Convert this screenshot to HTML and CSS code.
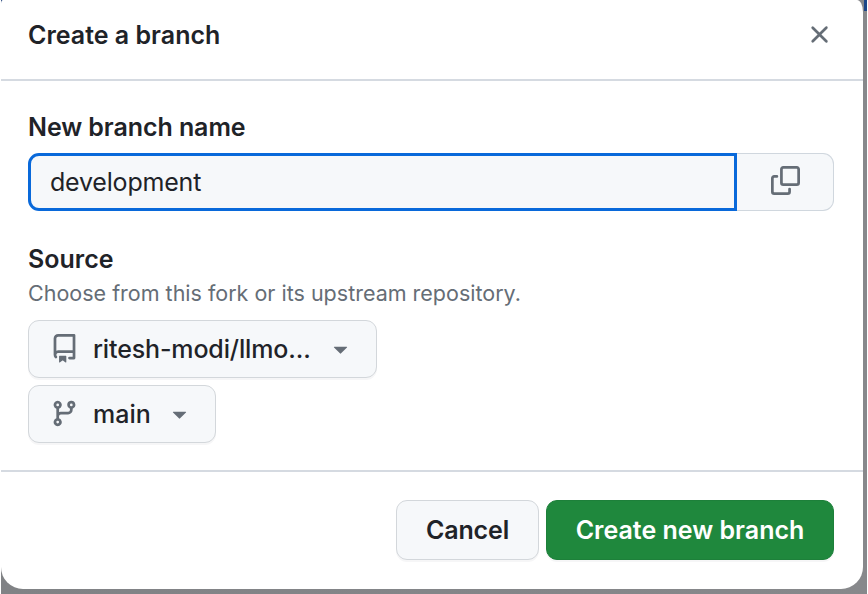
FILE: index.html
```html
<!DOCTYPE html>
<html lang="en">
<head>
<meta charset="utf-8">
<title>Create a branch</title>
<link rel="stylesheet" href="styles.css">
</head>
<body>
<div class="backdrop">
  <div class="dialog" role="dialog" aria-labelledby="dialog-title">
    <header class="dialog-header">
      <h1 class="dialog-title" id="dialog-title"><span>Create a branch</span></h1>
      <button class="close" aria-label="Close">
        <svg class="icon" viewBox="0 0 16 16"><path d="M3.72 3.72a.75.75 0 0 1 1.06 0L8 6.94l3.22-3.22a.749.749 0 0 1 1.275.326.749.749 0 0 1-.215.734L9.06 8l3.22 3.22a.749.749 0 0 1-.326 1.275.749.749 0 0 1-.734-.215L8 9.06l-3.22 3.22a.751.751 0 0 1-1.042-.018.751.751 0 0 1-.018-1.042L6.94 8 3.72 4.78a.75.75 0 0 1 0-1.06Z"/></svg>
      </button>
    </header>
    <div class="dialog-body">
      <label class="label name-label" for="branch-name"><span>New branch name</span></label>
      <div class="input-group">
        <input class="input" id="branch-name" type="text" value="development">
        <button class="copy" aria-label="Copy">
          <svg class="icon" viewBox="0 0 16 16"><path d="M0 6.75C0 5.784.784 5 1.75 5h1.5a.75.75 0 0 1 0 1.5h-1.5a.25.25 0 0 0-.25.25v7.5c0 .138.112.25.25.25h7.5a.25.25 0 0 0 .25-.25v-1.5a.75.75 0 0 1 1.5 0v1.5A1.75 1.75 0 0 1 9.25 16h-7.5A1.75 1.75 0 0 1 0 14.25Z"/><path d="M5 1.75C5 .784 5.784 0 6.75 0h7.5C15.216 0 16 .784 16 1.75v7.5A1.75 1.75 0 0 1 14.25 11h-7.5A1.75 1.75 0 0 1 5 9.25Zm1.75-.25a.25.25 0 0 0-.25.25v7.5c0 .138.112.25.25.25h7.5a.25.25 0 0 0 .25-.25v-7.5a.25.25 0 0 0-.25-.25Z"/></svg>
        </button>
      </div>
      <div class="label source-label"><span>Source</span></div>
      <p class="hint"><span>Choose from this fork or its upstream repository.</span></p>
      <button class="btn select select-repo">
        <svg class="icon" viewBox="0 0 16 16"><path d="M2 2.5A2.5 2.5 0 0 1 4.5 0h8.75a.75.75 0 0 1 .75.75v12.5a.75.75 0 0 1-.75.75h-2.5a.75.75 0 0 1 0-1.5h1.75v-2h-8a1 1 0 0 0-.714 1.7.75.75 0 1 1-1.072 1.05A2.495 2.495 0 0 1 2 11.5Zm10.5-1h-8a1 1 0 0 0-1 1v6.708A2.486 2.486 0 0 1 4.5 9h8ZM5 12.25a.25.25 0 0 1 .25-.25h3.5a.25.25 0 0 1 .25.25v3.25a.25.25 0 0 1-.4.2l-1.45-1.087a.249.249 0 0 0-.3 0L5.4 15.7a.25.25 0 0 1-.4-.2Z"/></svg>
        <span class="select-text">ritesh-modi/llmo...</span>
        <svg class="icon" viewBox="0 0 16 16"><path d="m4.427 7.427 3.396 3.396a.25.25 0 0 0 .354 0l3.396-3.396A.25.25 0 0 0 11.396 7H4.604a.25.25 0 0 0-.177.427Z"/></svg>
      </button>
      <button class="btn select select-branch">
        <svg class="icon" viewBox="0 0 16 16"><path d="M9.5 3.25a2.25 2.25 0 1 1 3 2.122V6A2.5 2.5 0 0 1 10 8.5H6a1 1 0 0 0-1 1v1.128a2.251 2.251 0 1 1-1.5 0V5.372a2.25 2.25 0 1 1 1.5 0v1.836A2.493 2.493 0 0 1 6 7h4a1 1 0 0 0 1-1v-.628A2.25 2.25 0 0 1 9.5 3.25Zm-6 0a.75.75 0 1 0 1.5 0 .75.75 0 0 0-1.5 0Zm8.25-.75a.75.75 0 1 0 0 1.5.75.75 0 0 0 0-1.5ZM4.25 12a.75.75 0 1 0 0 1.5.75.75 0 0 0 0-1.5Z"/></svg>
        <span class="select-text">main</span>
        <svg class="icon" viewBox="0 0 16 16"><path d="m4.427 7.427 3.396 3.396a.25.25 0 0 0 .354 0l3.396-3.396A.25.25 0 0 0 11.396 7H4.604a.25.25 0 0 0-.177.427Z"/></svg>
      </button>
    </div>
    <footer class="dialog-footer">
      <button class="btn cancel"><span>Cancel</span></button>
      <button class="btn create"><span>Create new branch</span></button>
    </footer>
  </div>
</div>
</body>
</html>
```
FILE: styles.css
```css
* {
  box-sizing: border-box;
}

body {
  margin: 0;
  height: 594px;
  overflow: hidden;
  background: #fff;
  color: #1f2328;
  font-family: Inter, "Liberation Sans", sans-serif;
}

button {
  margin: 0;
  padding: 0;
  font-family: inherit;
  color: inherit;
}

.backdrop {
  width: 866px;
  height: 594px;
  margin-left: 1px;
  background:
    linear-gradient(#1c4587, #1c4587) right top / 3px 11px no-repeat,
    linear-gradient(#1c3f78, #1c3f78) left top / 3px 3px no-repeat,
    linear-gradient(90deg, #808285, #87888b);
}

.dialog {
  display: flex;
  flex-direction: column;
  width: 862px;
  height: 589px;
  background: #fff;
  border-radius: 2px 6px 22px 22px / 4px 12px 22px 22px;
}

.icon {
  display: block;
  flex: none;
  width: 29px;
  height: 29px;
  fill: #656d76;
}

.dialog-header {
  display: flex;
  justify-content: space-between;
  height: 81px;
  padding: 19px 29px 0 27px;
  border-bottom: 2px solid #d5dae1;
}

.dialog-title,
.label {
  display: block;
  margin: 0;
  font-size: 25px;
  font-weight: 600;
  line-height: 32px;
}

.name-label {
  letter-spacing: -0.08px;
}

.close {
  width: 29px;
  height: 29px;
  margin-top: 1px;
  border: 0;
  background: none;
}

.dialog-body {
  height: 391px;
  padding: 30px 29px 0 27px;
  border-bottom: 2px solid #d5dae1;
}

.input-group {
  display: flex;
  height: 58px;
  margin-top: 10px;
}

.input {
  width: 709px;
  padding: 0 0 0 19px;
  border: 3px solid #0969da;
  border-radius: 11px 0 0 11px;
  outline: 0;
  background: #f6f8fa;
  color: #1f2328;
  font-family: inherit;
  font-size: 25px;
  letter-spacing: -0.2px;
}

.copy {
  display: flex;
  justify-content: center;
  width: 97px;
  padding-top: 12px;
  border: 1px solid #d0d7de;
  border-left: 0;
  border-radius: 0 11px 11px 0;
  background: #f6f8fa;
}

.source-label {
  margin-top: 32px;
}

.hint {
  margin: 4px 0 0;
  color: #656d76;
  font-size: 21.5px;
  line-height: 28px;
}

.btn {
  display: flex;
  align-items: center;
  border: 1px solid #d3d7db;
  border-radius: 11px;
  background: #f6f8fa;
  box-shadow: 0 2px 0 rgba(31, 35, 40, 0.04);
  font-size: 25px;
  font-weight: 600;
  white-space: nowrap;
}

.select {
  height: 58px;
  padding: 0 21px;
  justify-content: space-between;
  font-weight: 500;
}

.select .icon {
  margin-bottom: 1px;
}

.select-text {
  flex: 1;
  margin-left: 14px;
  text-align: left;
}

.select-repo {
  width: 349px;
  margin-top: 13px;
  letter-spacing: -0.14px;
}

.select-branch {
  width: 188px;
  margin-top: 7px;
}

.dialog-footer {
  display: flex;
  justify-content: flex-end;
  gap: 7px;
  padding: 28px 29px 0;
}

.dialog-footer .btn {
  justify-content: center;
  height: 60px;
}

.cancel {
  width: 143px;
  letter-spacing: -0.15px;
}

.dialog-footer .create {
  width: 288px;
  border-color: #1d803a;
  background: #1f883d;
  color: #fff;
}
```
